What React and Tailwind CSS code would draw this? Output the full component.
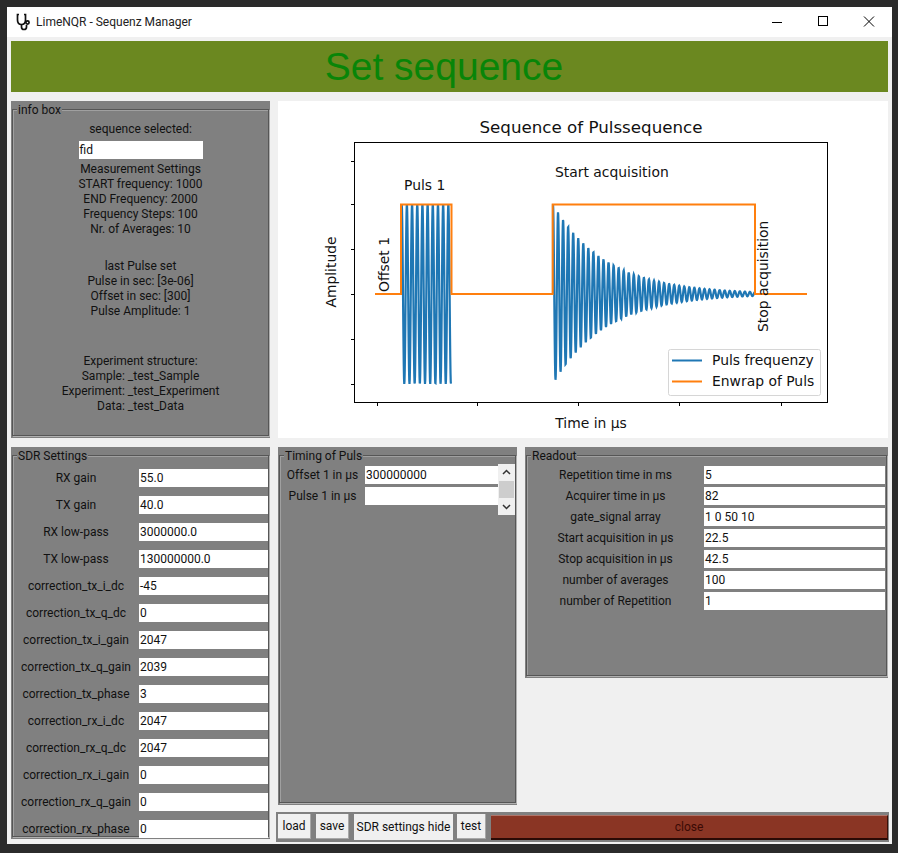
import React from "react";

const sdr = [
  ["RX gain", "55.0"], ["TX gain", "40.0"], ["RX low-pass", "3000000.0"], ["TX low-pass", "130000000.0"],
  ["correction_tx_i_dc", "-45"], ["correction_tx_q_dc", "0"], ["correction_tx_i_gain", "2047"], ["correction_tx_q_gain", "2039"],
  ["correction_tx_phase", "3"], ["correction_rx_i_dc", "2047"], ["correction_rx_q_dc", "2047"], ["correction_rx_i_gain", "0"],
  ["correction_rx_q_gain", "0"], ["correction_rx_phase", "0"],
];
const readout = [
  ["Repetition time in ms", "5"], ["Acquirer time in µs", "82"], ["gate_signal array", "1 0 50 10"], ["Start acquisition in µs", "22.5"],
  ["Stop acquisition in µs", "42.5"], ["number of averages", "100"], ["number of Repetition", "1"],
];

function Group({ title, className, children }) {
  return (
    <section className={"relative bg-[#808080] pt-[8px] px-px pb-[2px] " + className}>
      <div className="h-full border border-[#565656] shadow-[1px_1px_0_#b0b0b0,inset_1px_1px_0_#a0a0a0]">{children}</div>
      <span className="absolute left-[6px] top-px bg-[#808080] px-px leading-[16px] text-[#111]">{title}</span>
    </section>
  );
}

function Field({ value, className }) {
  return <div className={"bg-white px-px leading-[19px] h-[18px] overflow-hidden text-[#111] " + className}>{value}</div>;
}

function Line({ children }) {
  return <div className="h-[15px] leading-[15px] text-[#111]">{children}</div>;
}

function Plot() {
  let blue = "";
  for (let x = 401.5; x <= 451.2; x += 0.25) {
    const y = 294 + 90 * Math.cos(((x - 404.3) / 5.18) * 2 * Math.PI);
    blue += (blue ? "L" : "M") + x.toFixed(2) + " " + y.toFixed(2);
  }
  let decay = "";
  for (let x = 553; x <= 755; x += 0.25) {
    const y = 294 - 90 * Math.exp(-(x - 553) / 53) * Math.cos(((x - 553) / 5.05) * 2 * Math.PI);
    decay += (decay ? "L" : "M") + x.toFixed(2) + " " + y.toFixed(2);
  }
  const xt = [377, 477, 578, 679, 781];
  const yt = [161, 204, 249, 294, 339, 384];
  const f = { fontFamily: "'DejaVu Sans', sans-serif", fontSize: 13.9, fill: "#111" };
  return (
    <svg className="block w-full h-full" viewBox="278 101 610 337">
      <path d={blue} fill="none" stroke="#1f77b4" strokeWidth="2.2" />
      <path d={"M553 294L553 204" + decay.replace(/^M/, "L")} fill="none" stroke="#1f77b4" strokeWidth="2.2" />
      <path d="M375 294H401V204.5H451.5V294H552.7V204.5H755V294H807" fill="none" stroke="#ff7f0e" strokeWidth="2" />
      <rect x="354.5" y="142.5" width="473" height="260" fill="none" stroke="#000" strokeWidth="1" />
      {xt.map((x) => <path key={x} d={`M${x + 0.5} 403V406`} stroke="#000" />)}
      {yt.map((y) => <path key={y} d={`M351 ${y + 0.5}H354`} stroke="#000" />)}
      <text x="591" y="133" textAnchor="middle" style={{ ...f, fontSize: 16.7 }}>Sequence of Pulssequence</text>
      <text x="591" y="428" textAnchor="middle" style={f}>Time in µs</text>
      <text transform="translate(336 272) rotate(-90)" textAnchor="middle" style={f}>Amplitude</text>
      <text x="404" y="190" style={f}>Puls 1</text>
      <text x="555" y="177" style={f}>Start acquisition</text>
      <text transform="translate(389 292) rotate(-90)" style={f}>Offset 1</text>
      <text transform="translate(768 332) rotate(-90)" style={f}>Stop acquisition</text>
      <rect x="668.5" y="349.5" width="152" height="46" rx="2" fill="#fff" fillOpacity="0.8" stroke="#d6d6d6" />
      <path d="M672 360.5H702" stroke="#1f77b4" strokeWidth="2" />
      <path d="M672 381.5H702" stroke="#ff7f0e" strokeWidth="2" />
      <text x="712" y="365" style={f}>Puls frequenzy</text>
      <text x="712" y="386" style={f}>Enwrap of Puls</text>
    </svg>
  );
}

export default function App() {
  return (
    <div className="w-[898px] h-[853px] bg-[#2b2b2b] pt-[7px] pl-[7px] pr-[6px] pb-[9px] text-[12px] text-black font-['Roboto','Noto_Sans',sans-serif]">
      <div className="h-full flex flex-col bg-[#f0f0f0]">
        <header className="h-[30px] shrink-0 bg-white flex items-center">
          <svg className="ml-[9px] w-[16px] h-[18px]" viewBox="0 0 16 18" fill="none" stroke="#111" strokeWidth="1.7">
            <path d="M3 1.5H1.5V7C1.5 10 3.5 11.5 5.5 11.5S9.5 10 9.5 7V1.5H8" />
            <path d="M5.5 11.5V14C5.5 15.5 6.5 16.5 8 16.5S10.5 15.5 10.5 14V12" />
            <circle cx="11.5" cy="9.5" r="1.6" />
          </svg>
          <span className="ml-[4px] text-[12px] text-[#222]">LimeNQR - Sequenz Manager</span>
          <div className="ml-auto flex items-center h-full">
            <svg className="w-[46px] h-[30px]" viewBox="0 0 46 30"><path d="M18 15.5H28" stroke="#000" /></svg>
            <svg className="w-[46px] h-[30px]" viewBox="0 0 46 30"><rect x="18.5" y="9.5" width="9" height="9" fill="none" stroke="#000" /></svg>
            <svg className="w-[46px] h-[30px]" viewBox="0 0 46 30"><path d="M18 9.5L28 19.5M28 9.5L18 19.5" stroke="#000" /></svg>
          </div>
        </header>

        <div className="flex-1 min-h-0 flex flex-col pt-[4px] pl-[4px] pr-[4px]">
          <div className="h-[51px] shrink-0 bg-[#6b8820] flex items-center justify-center text-[#088508] text-[39px] font-['Liberation_Sans',sans-serif] leading-none pr-[11px]">
            Set sequence
          </div>

          <div className="mt-[9px] h-[337px] shrink-0 flex gap-[8px]">
            <Group title="info box" className="w-[259px] shrink-0">
              <div className="pt-[12px] text-center">
                <Line>sequence selected:</Line>
                <div className="flex justify-center mt-[4px] mb-[3px]">
                  <div className="w-[124px] h-[18px] bg-white text-left px-px leading-[18px] text-[#111]">fid</div>
                </div>
                <Line>Measurement Settings</Line>
                <Line>START frequency: 1000</Line>
                <Line>END Frequency: 2000</Line>
                <Line>Frequency Steps: 100</Line>
                <Line>Nr. of Averages: 10</Line>
                <div className="h-[22px]" />
                <Line>last Pulse set</Line>
                <Line>Pulse in sec: [3e-06]</Line>
                <Line>Offset in sec: [300]</Line>
                <Line>Pulse Amplitude: 1</Line>
                <div className="h-[35px]" />
                <Line>Experiment structure:</Line>
                <Line>Sample: _test_Sample</Line>
                <Line>Experiment: _test_Experiment</Line>
                <Line>Data: _test_Data</Line>
              </div>
            </Group>
            <div className="flex-1 bg-white"><Plot /></div>
          </div>

          <div className="mt-[9px] flex-1 flex gap-[8px] min-h-0 pb-[2px]">
            <Group title="SDR Settings" className="w-[259px] h-[392px] shrink-0">
              <div className="pt-[13px] flex flex-col gap-[9px]">
                {sdr.map(([l, v]) => (
                  <div key={l} className="flex items-center h-[18px]">
                    <div className="w-[126px] text-center shrink-0 text-[#111]">{l}</div>
                    <Field value={v} className="w-[130px]" />
                  </div>
                ))}
              </div>
            </Group>

            <div className="flex-1 flex flex-col min-w-0">
              <div className="flex-1 flex gap-[8px] items-start">
                <Group title="Timing of Puls" className="w-[239px] h-[358px] shrink-0">
                  <div className="pt-[10px] flex">
                    <div className="w-[85px] shrink-0 flex flex-col gap-[3px] text-center text-[#111]">
                      <div className="h-[18px] leading-[19px]">Offset 1 in µs</div>
                      <div className="h-[18px] leading-[19px]">Pulse 1 in µs</div>
                    </div>
                    <div className="w-[133px] shrink-0 flex flex-col gap-[3px]">
                      <Field value="300000000" />
                      <Field value="" />
                    </div>
                    <div className="-mt-[2px] w-[17px] h-[51px] bg-[#f0f0f0] flex flex-col items-center justify-between">
                      <svg className="w-[17px] h-[17px]" viewBox="0 0 17 17" fill="none" stroke="#333" strokeWidth="1.5"><path d="M5 10L8.5 6.5L12 10" /></svg>
                      <div className="w-[15px] h-[17px] bg-[#cdcdcd]" />
                      <svg className="w-[17px] h-[17px]" viewBox="0 0 17 17" fill="none" stroke="#333" strokeWidth="1.5"><path d="M5 7L8.5 10.5L12 7" /></svg>
                    </div>
                  </div>
                </Group>
                <Group title="Readout" className="flex-1 h-[231px] min-w-0">
                  <div className="pt-[10px] flex flex-col gap-[3px]">
                    {readout.map(([l, v]) => (
                      <div key={l} className="flex items-center h-[18px]">
                        <div className="w-[177px] text-center shrink-0 text-[#111] leading-[19px]">{l}</div>
                        <Field value={v} className="flex-1 mr-px" />
                      </div>
                    ))}
                  </div>
                </Group>
              </div>
              <div className="mt-[7px] -ml-[2px] -mr-px h-[30px] shrink-0 bg-[#808080] flex items-start gap-[5px] pt-[2px] pl-[2px] pr-px text-[#111]">
                {[["load", "w-[33px]"], ["save", "w-[33px]"]].map(([t, w]) => (
                  <button key={t} className={"bg-[#f0f0f0] border-r border-b border-[#a8a8a8] h-[25px] " + w}>{t}</button>
                ))}
                <button className="bg-[#f0f0f0] w-[99px] h-[26px]">SDR settings hide</button>
                <button className="-ml-px bg-[#f0f0f0] border-r border-b border-[#a8a8a8] w-[29px] h-[25px]">test</button>
                <button className="flex-1 mt-px h-[25px] bg-[#8a3524] border-t border-t-[#b0756a] border-b-2 border-b-[#2a0a05] border-r border-r-[#3a1008] text-[#3a0a05]">close</button>
              </div>
            </div>
          </div>
        </div>
      </div>
    </div>
  );
}
